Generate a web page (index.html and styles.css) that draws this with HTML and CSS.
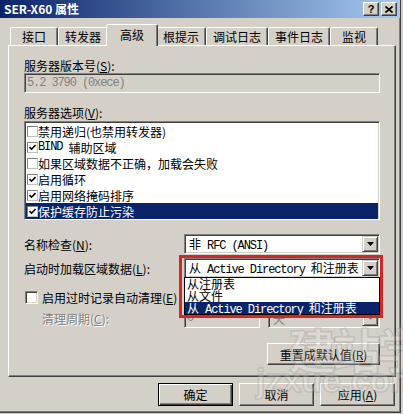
FILE: index.html
```html
<!DOCTYPE html>
<html lang="zh-CN">
<head>
  <meta charset="UTF-8" />
  <meta name="viewport" content="width=device-width, initial-scale=1.0"/>
  <title>SER-X60 属性</title>
  <link rel="stylesheet" href="styles.css">
</head>
<body>
<div class="window">
  <div class="titlebar">
    <span class="title">SER-X60 属性</span>
    <div class="caption-buttons">
      <span class="cap-btn">?</span>
      <span class="cap-btn">
        <svg width="8" height="7" viewBox="0 0 8 7"><path d="M0.5 0.5 L7.5 6.5 M7.5 0.5 L0.5 6.5" stroke="#000" stroke-width="1.7"/></svg>
      </span>
    </div>
  </div>

  <div class="tabs">
    <div class="tab">接口</div>
    <div class="tab">转发器</div>
    <div class="tab active">高级</div>
    <div class="tab">根提示</div>
    <div class="tab">调试日志</div>
    <div class="tab">事件日志</div>
    <div class="tab">监视</div>
  </div>

  <div class="panel">
    <div class="label first">服务器版本号(<u>S</u>):</div>
    <div class="field disabled"><span class="mono">5.2 3790 (0xece)</span></div>

    <div class="label second">服务器选项(<u>V</u>):</div>
    <ul class="listbox">
      <li><span class="lcheck"></span>禁用递归(也禁用转发器)</li>
      <li><span class="lcheck"><svg width="7" height="7" viewBox="0 0 7 7"><path d="M0.5 3 L2.5 5.2 L6.5 1" fill="none" stroke="#000" stroke-width="1.6"/></svg></span><span class="mono">BIND&nbsp;</span>辅助区域</li>
      <li><span class="lcheck"></span>如果区域数据不正确，加载会失败</li>
      <li><span class="lcheck"><svg width="7" height="7" viewBox="0 0 7 7"><path d="M0.5 3 L2.5 5.2 L6.5 1" fill="none" stroke="#000" stroke-width="1.6"/></svg></span>启用循环</li>
      <li><span class="lcheck"><svg width="7" height="7" viewBox="0 0 7 7"><path d="M0.5 3 L2.5 5.2 L6.5 1" fill="none" stroke="#000" stroke-width="1.6"/></svg></span>启用网络掩码排序</li>
      <li class="selected"><span class="lcheck"><svg width="7" height="7" viewBox="0 0 7 7"><path d="M0.5 3 L2.5 5.2 L6.5 1" fill="none" stroke="#000" stroke-width="1.6"/></svg></span>保护缓存防止污染</li>
    </ul>

    <div class="form-row name-row">
      <span class="row-label">名称检查(<u>N</u>):</span>
      <div class="combo">
        <span class="combo-text">非<span class="mono">&nbsp;RFC (ANSI)</span></span>
        <span class="drop-btn"><svg width="7" height="4" viewBox="0 0 7 4"><path d="M0 0 H7 L3.5 4 Z" fill="#000"/></svg></span>
      </div>
    </div>

    <div class="form-row load-row">
      <span class="row-label">启动时加载区域数据(<u>L</u>):</span>
      <div class="combo">
        <span class="combo-text">从<span class="mono">&nbsp;Active Directory&nbsp;</span>和注册表</span>
        <span class="drop-btn"><svg width="7" height="4" viewBox="0 0 7 4"><path d="M0 0 H7 L3.5 4 Z" fill="#000"/></svg></span>
        <ul class="dropdown">
          <li>从注册表</li>
          <li>从文件</li>
          <li class="selected">从<span class="mono">&nbsp;Active Directory&nbsp;</span>和注册表</li>
        </ul>
        <div class="highlight"></div>
      </div>
    </div>

    <div class="check-row">
      <span class="checkbox"></span>启用过时记录自动清理(<u>E</u>)
    </div>

    <div class="form-row cleanup-row">
      <span class="row-label disabled-text">清理周期(<u>C</u>):</span>
      <div class="field disabled small"><span class="mono">0</span></div>
      <div class="combo disabled small-combo">
        <span class="combo-text">天</span>
        <span class="drop-btn"><svg width="7" height="4" viewBox="0 0 7 4"><path d="M0 0 H7 L3.5 4 Z" fill="#808080"/></svg></span>
      </div>
    </div>

    <button class="btn reset">重置成默认值(<u>R</u>)</button>
  </div>

  <div class="dialog-buttons">
    <button class="btn default">确定</button>
    <button class="btn">取消</button>
    <button class="btn">应用(<u>A</u>)</button>
  </div>

  <div class="watermark">
    <span class="wm-big">建站学</span>
    <span class="wm-small">jzxue.com</span>
  </div>
</div>
</body>
</html>
```

FILE: styles.css
```css
:root {
  --face: #d4d0c8;
  --shadow: #808080;
  --dark: #404040;
  --select: #0a246a;
  --mark: #d02828;
}

* {
  box-sizing: border-box;
}

body {
  margin: 0;
  width: 403px;
  height: 414px;
  overflow: hidden;
  background: var(--face);
  font-family: "Noto Sans CJK SC", sans-serif;
  font-size: 12px;
  color: #000;
}

u {
  text-decoration: underline;
}

.mono {
  font-family: "Liberation Mono", monospace;
  font-size: 12px;
  letter-spacing: -1.1px;
}

.window {
  position: relative;
  width: 401px;
  height: 413px;
  border-right: 1px solid var(--dark);
  border-bottom: 1px solid var(--dark);
  box-shadow: inset -1px -1px var(--shadow);
}

/* title bar */
.titlebar {
  height: 18px;
  display: flex;
  align-items: center;
  justify-content: space-between;
  padding: 0 3px 0 4px;
  background: linear-gradient(to right, #0a246a, #a6caf0);
}

.title {
  color: #fff;
  font-weight: bold;
  line-height: 18px;
}

.caption-buttons {
  display: flex;
  gap: 2px;
}

.cap-btn {
  width: 16px;
  height: 14px;
  display: flex;
  align-items: center;
  justify-content: center;
  background: var(--face);
  border: 1px solid;
  border-color: #fff var(--dark) var(--dark) #fff;
  box-shadow: inset -1px -1px var(--shadow);
  font: bold 11px "Liberation Sans", sans-serif;
}

/* tabs */
.tabs {
  display: flex;
  align-items: flex-end;
  height: 21px;
  margin: 6px 0 0 10px;
  position: relative;
  z-index: 1;
}

.tab {
  min-width: 48px;
  height: 18px;
  padding: 0 6px;
  text-align: center;
  line-height: 17px;
  background: var(--face);
  border: 1px solid;
  border-bottom: none;
  border-color: #fff var(--dark) transparent #fff;
  box-shadow: inset -1px 0 var(--shadow);
  border-radius: 2px 2px 0 0;
}

.tab.active {
  min-width: 52px;
  height: 22px;
  padding: 0 8px;
  margin: 0 -2px -1px;
  line-height: 19px;
  position: relative;
  z-index: 2;
}

/* tab page */
.panel {
  margin-left: 8px;
  width: 388px;
  height: 332px;
  display: flex;
  flex-direction: column;
  padding: 0 15px;
  border: 1px solid;
  border-color: #fff var(--dark) var(--dark) #fff;
  box-shadow: inset -1px -1px var(--shadow);
}

.label {
  height: 15px;
  line-height: 15px;
}

.label.first {
  margin-top: 12px;
}

.label.second {
  margin-top: 12px;
}

.field {
  height: 20px;
  padding: 0 2px;
  display: flex;
  align-items: center;
  background: #fff;
  border: 1px solid;
  border-color: var(--shadow) #fff #fff var(--shadow);
  box-shadow: inset 1px 1px var(--dark), inset -1px -1px var(--face);
}

.field.disabled {
  background: var(--face);
  color: var(--shadow);
}

.listbox {
  list-style: none;
  margin: 1px 0 0;
  padding: 1px;
  height: 99px;
  background: #fff;
  border: 1px solid;
  border-color: var(--shadow) #fff #fff var(--shadow);
  box-shadow: inset 1px 1px var(--dark), inset -1px -1px var(--face);
}

.listbox li {
  height: 16px;
  display: flex;
  align-items: center;
  white-space: nowrap;
}

.listbox li.selected {
  background: var(--select);
  color: #fff;
}

.lcheck {
  width: 11px;
  height: 11px;
  margin-left: 1px;
  display: flex;
  align-items: center;
  justify-content: center;
  background: #fff;
  border: 1px solid;
  border-color: var(--shadow) #c0c0c0 #c0c0c0 var(--shadow);
}

.form-row {
  display: flex;
  align-items: center;
  height: 20px;
}

.name-row {
  margin-top: 14px;
}

.load-row {
  margin-top: 4px;
}

.row-label {
  width: 160px;
  flex-shrink: 0;
}

.combo {
  position: relative;
  flex: 1;
  height: 20px;
  display: flex;
  align-items: center;
  padding-left: 4px;
  background: #fff;
  border: 1px solid;
  border-color: var(--shadow) #fff #fff var(--shadow);
  box-shadow: inset 1px 1px var(--dark), inset -1px -1px var(--face);
  white-space: nowrap;
}

.drop-btn {
  width: 16px;
  height: 16px;
  margin-left: auto;
  margin-right: 1px;
  display: flex;
  align-items: center;
  justify-content: center;
  background: var(--face);
  border: 1px solid;
  border-color: var(--face) var(--dark) var(--dark) var(--face);
  box-shadow: inset 1px 1px #fff, inset -1px -1px var(--shadow);
}

.dropdown {
  position: absolute;
  left: -1px;
  right: -1px;
  top: 100%;
  margin: 0;
  padding: 0;
  list-style: none;
  background: #fff;
  border: 1px solid #000;
  z-index: 3;
}

.dropdown li {
  height: 12px;
  line-height: 12px;
  padding-left: 2px;
  white-space: nowrap;
}

.dropdown li.selected {
  background: var(--select);
  color: #fff;
}

.highlight {
  position: absolute;
  left: -6px;
  top: -4px;
  width: 204px;
  height: 63px;
  border: 3px solid var(--mark);
  z-index: 4;
  pointer-events: none;
}

.check-row {
  margin-top: 11px;
  height: 16px;
  display: flex;
  align-items: center;
}

.checkbox {
  width: 13px;
  height: 13px;
  margin: 0 4px 0 1px;
  background: #fff;
  border: 1px solid;
  border-color: var(--shadow) #fff #fff var(--shadow);
  box-shadow: inset 1px 1px var(--dark), inset -1px -1px var(--face);
}

.cleanup-row {
  margin-top: 3px;
}

.disabled-text {
  padding-left: 18px;
  color: var(--shadow);
  text-shadow: 1px 1px #fff;
}

.field.small {
  width: 76px;
  flex: none;
}

.combo.disabled {
  background: var(--face);
  color: var(--shadow);
}

.small-combo {
  margin-left: 8px;
}

/* buttons */
.btn {
  height: 23px;
  width: 75px;
  padding: 0;
  font-family: "Noto Sans CJK SC", sans-serif;
  font-size: 12px;
  color: #000;
  background: var(--face);
  border: 1px solid;
  border-color: #fff var(--dark) var(--dark) #fff;
  box-shadow: inset -1px -1px var(--shadow);
}

.btn.default {
  border: 1px solid #000;
  box-shadow: inset 1px 1px #fff, inset -1px -1px var(--dark), inset -2px -2px var(--shadow);
}

.btn.reset {
  align-self: flex-end;
  margin-top: 15px;
  width: 113px;
  height: 22px;
}

.dialog-buttons {
  display: flex;
  justify-content: flex-end;
  gap: 6px;
  margin-top: 6px;
  padding-right: 5px;
}

/* site watermark over the screenshot */
.watermark {
  position: absolute;
  left: 256px;
  top: 320px;
  display: flex;
  flex-direction: column;
  align-items: flex-end;
  pointer-events: none;
  z-index: 5;
}

.wm-big {
  font-size: 48px;
  font-weight: bold;
  line-height: 56px;
  letter-spacing: -4px;
  color: rgba(255, 255, 255, 0.2);
  -webkit-text-stroke: 1.5px rgba(140, 140, 140, 0.3);
}

.wm-small {
  margin-top: -14px;
  font-family: "Liberation Sans", sans-serif;
  font-size: 34px;
  font-weight: bold;
  line-height: 36px;
  color: rgba(255, 255, 255, 0.2);
  -webkit-text-stroke: 1.5px rgba(140, 140, 140, 0.3);
}
```
